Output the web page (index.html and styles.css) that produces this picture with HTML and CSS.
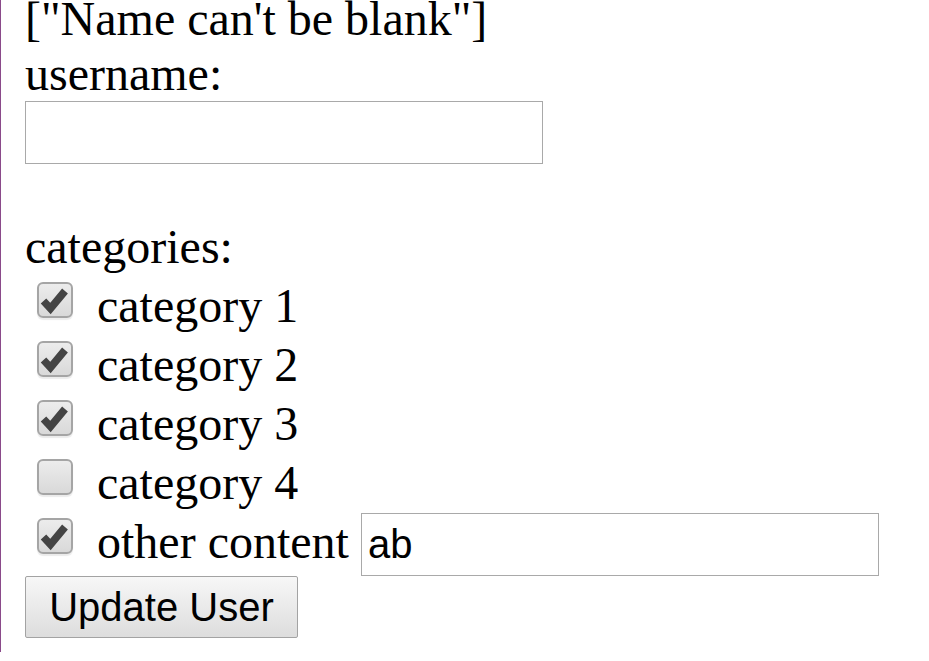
FILE: index.html
```html
<!DOCTYPE html>
<html lang="en">
<head>
<meta charset="utf-8">
<title>Edit user</title>
<link rel="stylesheet" href="styles.css">
</head>
<body>
<div class="page">
  <div class="line errors">["Name can't be blank"]</div>
  <div class="line">username:</div>
  <input class="text-input" type="text" value="">
  <div class="spacer"></div>
  <div class="line">categories:</div>
  <div class="cat-list">
    <div class="cat-row">
      <span class="cb"><svg viewBox="0 0 35 35" width="35" height="35"><polyline points="6.5,19 13.5,26.5 28,9" /></svg></span>
      <span class="cat-text">category 1</span>
    </div>
    <div class="cat-row">
      <span class="cb"><svg viewBox="0 0 35 35" width="35" height="35"><polyline points="6.5,19 13.5,26.5 28,9" /></svg></span>
      <span class="cat-text">category 2</span>
    </div>
    <div class="cat-row">
      <span class="cb"><svg viewBox="0 0 35 35" width="35" height="35"><polyline points="6.5,19 13.5,26.5 28,9" /></svg></span>
      <span class="cat-text">category 3</span>
    </div>
    <div class="cat-row">
      <span class="cb"></span>
      <span class="cat-text">category 4</span>
    </div>
    <div class="cat-row other-row">
      <span class="cb"><svg viewBox="0 0 35 35" width="35" height="35"><polyline points="6.5,19 13.5,26.5 28,9" /></svg></span>
      <span class="cat-text">other content</span>
      <input class="text-input other-input" type="text" value="ab">
    </div>
  </div>
  <button class="btn" type="button">Update User</button>
</div>
</body>
</html>
```

FILE: styles.css
```css
html, body {
  margin: 0;
  padding: 0;
  background: #ffffff;
}

body {
  overflow: hidden;
}

.page {
  box-sizing: border-box;
  min-height: 100vh;
  border-left: 1px solid #8a4a8a;
  padding-left: 24px;
  font-family: "Liberation Serif", "Times New Roman", serif;
  font-size: 48px;
  line-height: 55px;
  color: #000000;
}

.line {
  height: 55px;
  white-space: nowrap;
}

.errors {
  margin-top: -9px;
}

.text-input {
  display: block;
  box-sizing: border-box;
  width: 518px;
  height: 63px;
  margin: 0;
  padding: 3px 6px;
  border: 1px solid #a9a9a9;
  border-radius: 0;
  background: #ffffff;
  font-family: "Liberation Sans", Arial, sans-serif;
  font-size: 40px;
  color: #000000;
  outline: none;
}

.spacer {
  height: 55px;
}

.cat-list {
  display: flex;
  flex-direction: column;
}

.cat-row {
  display: flex;
  align-items: flex-start;
  height: 59px;
}

.cb {
  box-sizing: border-box;
  flex: none;
  width: 36px;
  height: 36px;
  margin-top: 8px;
  margin-left: 12px;
  border: 2px solid #a5a5a5;
  border-radius: 6px;
  background: linear-gradient(#ececec, #d9d9d9);
  box-shadow: 0 2px 1px rgba(0, 0, 0, 0.08);
  position: relative;
}

.cb svg {
  position: absolute;
  left: -2px;
  top: -2px;
}

.cb polyline {
  fill: none;
  stroke: #444444;
  stroke-width: 7.5;
  stroke-linejoin: miter;
  stroke-linecap: butt;
}

.cat-text {
  margin-left: 24px;
  margin-top: 4px;
  line-height: 55px;
  white-space: nowrap;
}

.other-row {
  height: 66px;
}

.other-input {
  margin-left: 12px;
  margin-top: 3px;
}

.btn {
  display: block;
  box-sizing: border-box;
  width: 273px;
  height: 62px;
  margin: 0;
  padding: 0;
  border: 1px solid #a3a3a3;
  border-radius: 2px;
  background: linear-gradient(#f7f7f7, #dddddd);
  font-family: "Liberation Sans", Arial, sans-serif;
  font-size: 40px;
  line-height: 46px;
  color: #000000;
}
```
